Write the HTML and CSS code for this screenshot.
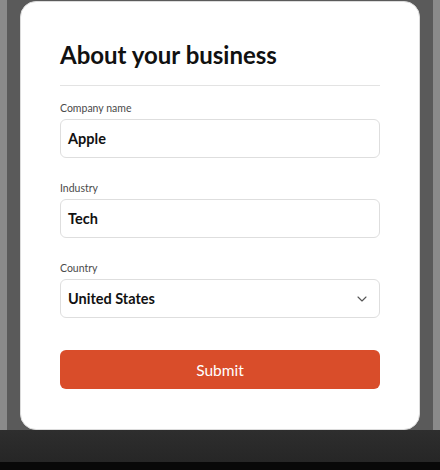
FILE: index.html
```html
<!DOCTYPE html>
<html lang="en">
<head>
<meta charset="utf-8">
<title>About your business</title>
<link rel="stylesheet" href="styles.css">
</head>
<body>
<div class="card">
  <h1 class="title">About your business</h1>
  <div class="divider"></div>
  <form class="form">
    <div class="field">
      <label class="label">Company name</label>
      <div class="input">Apple</div>
    </div>
    <div class="field">
      <label class="label">Industry</label>
      <div class="input">Tech</div>
    </div>
    <div class="field">
      <label class="label">Country</label>
      <div class="input select">
        <span>United States</span>
        <svg class="chevron" width="10" height="6" viewBox="0 0 10 6"><path d="M1 1l4 4 4-4" fill="none" stroke="#555" stroke-width="1.1" stroke-linecap="round" stroke-linejoin="round"/></svg>
      </div>
    </div>
    <div class="button">Submit</div>
  </form>
</div>
</body>
</html>
```

FILE: styles.css
```css
html, body {
  margin: 0;
  padding: 0;
}
body {
  width: 440px;
  height: 470px;
  overflow: hidden;
  background:
    linear-gradient(to bottom, rgba(0,0,0,0) 430px, #2e2e2e 430px, #262626 462px, #080808 462px),
    linear-gradient(to right, #8a8a8a 0, #8a8a8a 7px, #5a5a5a 7px, #5a5a5a 433px, #8a8a8a 433px);
  font-family: Lato, "Noto Sans", sans-serif;
  padding-top: 1px;
  box-sizing: border-box;
}
.card {
  margin: 0 20px;
  height: 429px;
  box-sizing: border-box;
  background: #fff;
  border-radius: 16px;
  border: 1px solid #dcdcdc;
  padding: 38px 39px 0;
}
.title {
  margin: 0;
  font-size: 24px;
  line-height: 30px;
  font-weight: 700;
  color: #111;
}
.divider {
  height: 1px;
  background: #e3e3e3;
  margin-top: 15px;
}
.form {
  display: flex;
  flex-direction: column;
  margin-top: 15px;
}
.field {
  display: flex;
  flex-direction: column;
  gap: 4px;
  margin-bottom: 23px;
}
.label {
  font-size: 10.5px;
  line-height: 14px;
  color: #4a4a4a;
}
.input {
  height: 39px;
  box-sizing: border-box;
  border: 1px solid #dedede;
  border-radius: 6px;
  padding: 0 7px;
  display: flex;
  align-items: center;
  font-size: 14.5px;
  font-weight: 700;
  color: #111;
}
.select {
  justify-content: space-between;
  padding-right: 12px;
}
.button {
  margin-top: 9px;
  height: 39px;
  border-radius: 6px;
  background: #d94d2a;
  color: #fff;
  display: flex;
  align-items: center;
  justify-content: center;
  font-size: 15.5px;
}
```
